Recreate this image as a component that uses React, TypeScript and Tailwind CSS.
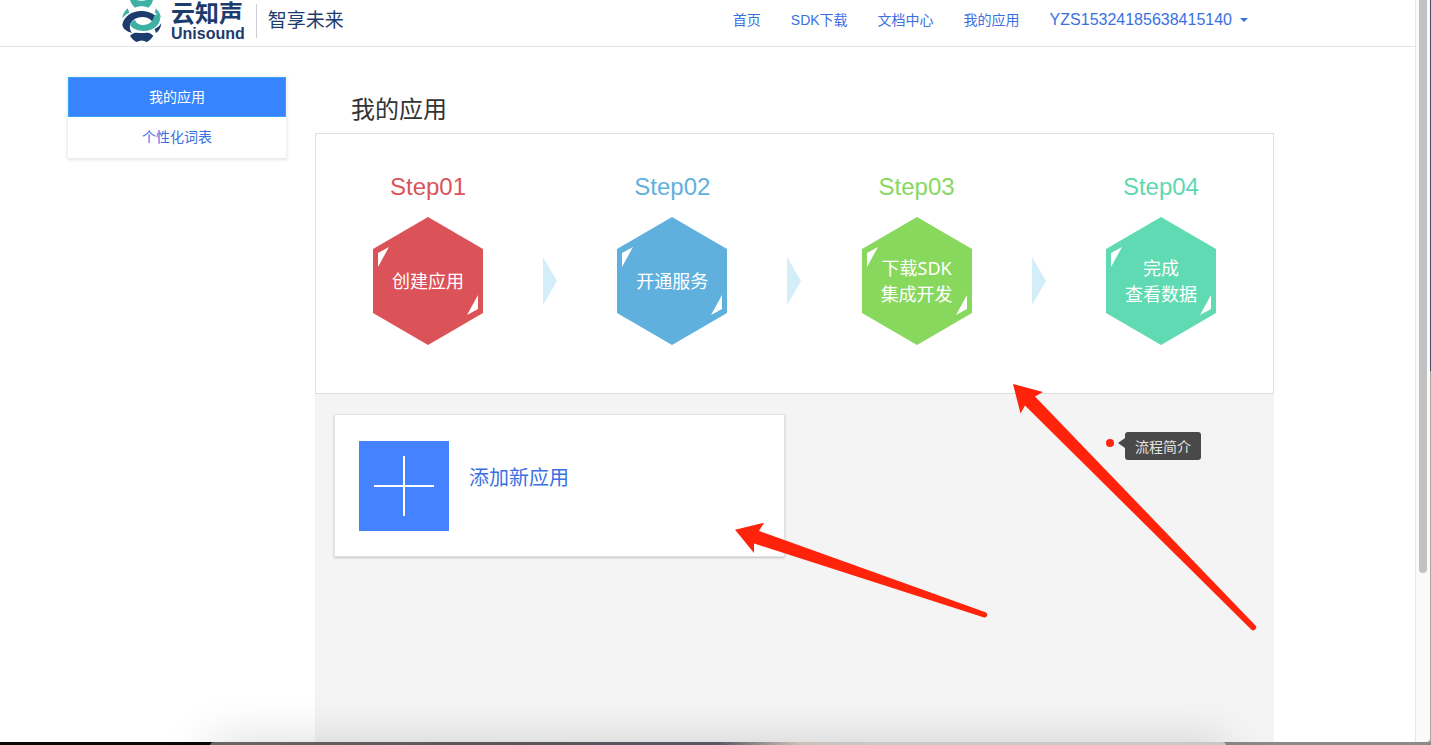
import React from "react";

type Step = {
  label: string;
  lines: string[];
  text: string;
  fill: string;
};

const steps: Step[] = [
  { label: "Step01", lines: ["创建应用"], text: "text-[#d9545a]", fill: "fill-[#db5359]" },
  { label: "Step02", lines: ["开通服务"], text: "text-[#5fb0dd]", fill: "fill-[#60b0de]" },
  { label: "Step03", lines: ["下载SDK", "集成开发"], text: "text-[#86d95f]", fill: "fill-[#88d85e]" },
  { label: "Step04", lines: ["完成", "查看数据"], text: "text-[#5fd8b1]", fill: "fill-[#60dab2]" },
];

const navLinks = ["首页", "SDK下载", "文档中心", "我的应用"];

function LogoMark() {
  return (
    <svg viewBox="30 0 126 126" className="h-[42px] w-[42px]" aria-hidden="true">
      <path d="M60 0 C63 10 68 17 75 23 C87 17 103 17 115 23 C122 17 127 10 129 0 Z" className="fill-[#3eb0a4]" />
      <path d="M80 0 C88 3 102 3 110 0 Z" className="fill-white" />
      <path d="M53 25 L58 38 C49 42 43 47 37 55 C38 43 44 33 53 25 Z" className="fill-[#3eb0a4]" />
      <path d="M137 25 C146 33 152 43 153 55 C149 48 143 43 135 38 Z" className="fill-[#3eb0a4]" />
      <path d="M37 73 C43 46 70 31 97 33 C118 34 137 43 145 58 L134 74 C126 60 114 51 98 51 C80 51 65 60 60 74 C58 84 61 92 66 99 C50 95 38 87 37 73 Z" className="fill-[#1d3c6e]" />
      <path d="M148 45 C158 68 132 94 100 93 C82 92 67 86 60 75 C62 67 67 62 75 59 C78 69 88 75 100 75 C117 74 129 65 132 48 C138 42 144 41 148 45 Z" className="fill-[#3eb0a4]" />
      <path d="M154 70 C153 83 147 93 138 99 L134 87 C143 83 149 78 154 70 Z" className="fill-[#1d3c6e]" />
      <path d="M60 107 C73 94 84 99 95 99 C106 99 117 94 130 107 C125 115 118 122 110 126 C100 120 90 120 80 126 C72 122 65 115 60 107 Z" className="fill-[#1d3c6e]" />
    </svg>
  );
}

function Header() {
  return (
    <header className="flex h-[47px] shrink-0 items-start border-b border-[#e4e4e4] pr-[167px] pl-[120px]">
      <a href="#" className="flex items-start text-[#1d3c6e]">
        <LogoMark />
        <span className="ml-[9px] flex flex-col pt-[1px]">
          <span className="text-[24px] leading-[26px] font-bold">云知声</span>
          <span className="text-[16px] leading-[14px] font-bold">Unisound</span>
        </span>
        <span className="mt-1 ml-[11px] h-[34px] w-px bg-[#c9d0da]" />
        <span className="ml-[11px] text-[19px] leading-[42px]">智享未来</span>
      </a>
      <nav className="ml-auto flex items-center gap-[30px] text-[14px] leading-[40px] text-[#3a70e3]">
        {navLinks.map((n) => (
          <a key={n} href="#">{n}</a>
        ))}
        <button type="button" className="flex items-center gap-2">
          <span className="text-[16px]">YZS15324185638415140</span>
          <svg viewBox="0 0 8 4" className="h-1 w-2 fill-current" aria-hidden="true">
            <path d="M0 0h8L4 4z" />
          </svg>
        </button>
      </nav>
    </header>
  );
}

function Sidebar() {
  return (
    <aside className="mt-[30px] w-[218px] shrink-0 self-start bg-white pb-[1px] text-center text-[14px] shadow-[0_1px_3px_1px_rgba(0,0,0,0.1)]">
      <a href="#" className="block border border-[#3da2f5] bg-[#3884ff] leading-[38px] text-white">我的应用</a>
      <a href="#" className="block leading-[40px] text-[#3a70e3]">个性化词表</a>
    </aside>
  );
}

function StepItem({ step }: { step: Step }) {
  return (
    <li className="flex flex-col items-center gap-[14px]">
      <span className={`text-[24px] leading-[32px] ${step.text}`}>{step.label}</span>
      <div className="grid place-items-center">
        <svg viewBox="0 0 110 128" className="col-start-1 row-start-1 h-32 w-[110px]" aria-hidden="true">
          <path d="M55 0l55 32v64l-55 32L0 96V32z" className={step.fill} />
          <path d="M5 36l11-6L5 50zM105 78v14l-11 6z" className="fill-white" />
        </svg>
        <span className="col-start-1 row-start-1 text-center font-['Noto_Sans','Noto_Sans_CJK_SC',sans-serif] text-[18px] leading-[26px] text-white">
          {step.lines.map((l) => (
            <span key={l} className="block">{l}</span>
          ))}
        </span>
      </div>
    </li>
  );
}

function Steps() {
  return (
    <ol className="flex items-end justify-between border border-[#dedede] bg-white px-[57px] pt-[37px] pb-12">
      {steps.map((s, i) => (
        <React.Fragment key={s.label}>
          {i > 0 && (
            <li aria-hidden="true" className="mb-10">
              <svg viewBox="0 0 14 48" className="h-12 w-[14px] fill-[#d3edf9]">
                <path d="M0 0l14 24L0 48z" />
              </svg>
            </li>
          )}
          <StepItem step={s} />
        </React.Fragment>
      ))}
    </ol>
  );
}

function AddCard() {
  return (
    <button type="button" className="mt-5 ml-[19px] flex w-[451px] items-start gap-5 border border-[#e2e3e5] bg-white px-6 pt-[26px] pb-[25px] text-left shadow-[0_1px_2px_rgba(0,0,0,0.2)]">
      <svg viewBox="0 0 90 90" className="h-[90px] w-[90px] bg-[#4482ff]" aria-hidden="true">
        <path d="M15 45h60M45 15v60" className="fill-none stroke-white stroke-2" />
      </svg>
      <span className="pt-[21px] text-[20px] leading-[32px] text-[#3a70e3]">添加新应用</span>
    </button>
  );
}

function Annotations() {
  return (
    <div className="pointer-events-none absolute inset-0 z-20">
      <svg viewBox="0 0 1431 745" className="absolute top-0 left-0 h-[745px] w-[1431px] fill-[#ff230b]" aria-hidden="true">
        <path d="M1013 384l30 8-8 4.500L1255.200 625.200a2.900 2.900 0 0 1-4 4.300L1025 405.500l-4.500 8z" />
        <path d="M735 529.700l29-7-5 8.300 226.500 81.200a2.700 2.700 0 0 1-1.300 5.200L754 543.500v9.500z" />
        <circle cx="1110" cy="443" r="4" />
      </svg>
      <div role="tooltip" className="absolute top-[432px] left-[1118px] flex items-start">
        <svg viewBox="0 0 7 10" className="mt-[6px] h-[10px] w-[7px] fill-[#494949]" aria-hidden="true">
          <path d="M7 0v10L0 5z" />
        </svg>
        <span className="h-7 rounded-[3px] bg-[#494949] px-[10px] text-[14px] leading-[30px] text-[#e4e4e4]">流程简介</span>
      </div>
    </div>
  );
}

export default function App() {
  return (
    <div className="relative flex h-screen flex-col overflow-hidden bg-[linear-gradient(90deg,#0a0707_0_30%,#8a8a8a_85%)] font-['Liberation_Sans','Noto_Sans_CJK_SC',sans-serif]">
      <div className="mb-[3px] flex min-h-0 flex-1 bg-[linear-gradient(180deg,#454763_0_50%,#a5a5a5_50%)] pr-px">
        <div className="flex min-w-0 flex-1 flex-col bg-white">
          <Header />
          <div className="flex min-h-0 flex-1 gap-[29px] pr-[141px] pl-[68px]">
            <Sidebar />
            <main className="flex min-w-0 flex-1 flex-col">
              <h1 className="pt-[47px] pb-[7px] pl-9 text-[24px] leading-[32px] text-[#333]">我的应用</h1>
              <Steps />
              <section className="flex-1 bg-[#f4f4f4]">
                <AddCard />
              </section>
            </main>
          </div>
        </div>
        <div className="w-[15px] shrink-0 rounded-br border-l border-[#e6e6e6] bg-[#fafafa]" aria-hidden="true">
          <div className="ml-[3px] h-[573px] w-2 rounded-b-full bg-[#c1c1c1]" />
        </div>
      </div>
      <div
        className="absolute top-[calc(100%-3px)] right-[205px] left-[210px] h-24 rounded-t bg-[linear-gradient(90deg,#6b6466,#5a5458_30%,#5b5863_50%,#c9c1bb_58%,#c8c8c8_65%)] shadow-[0_0_50px_rgba(0,0,0,0.15)]"
        aria-hidden="true"
      />
      <Annotations />
    </div>
  );
}
